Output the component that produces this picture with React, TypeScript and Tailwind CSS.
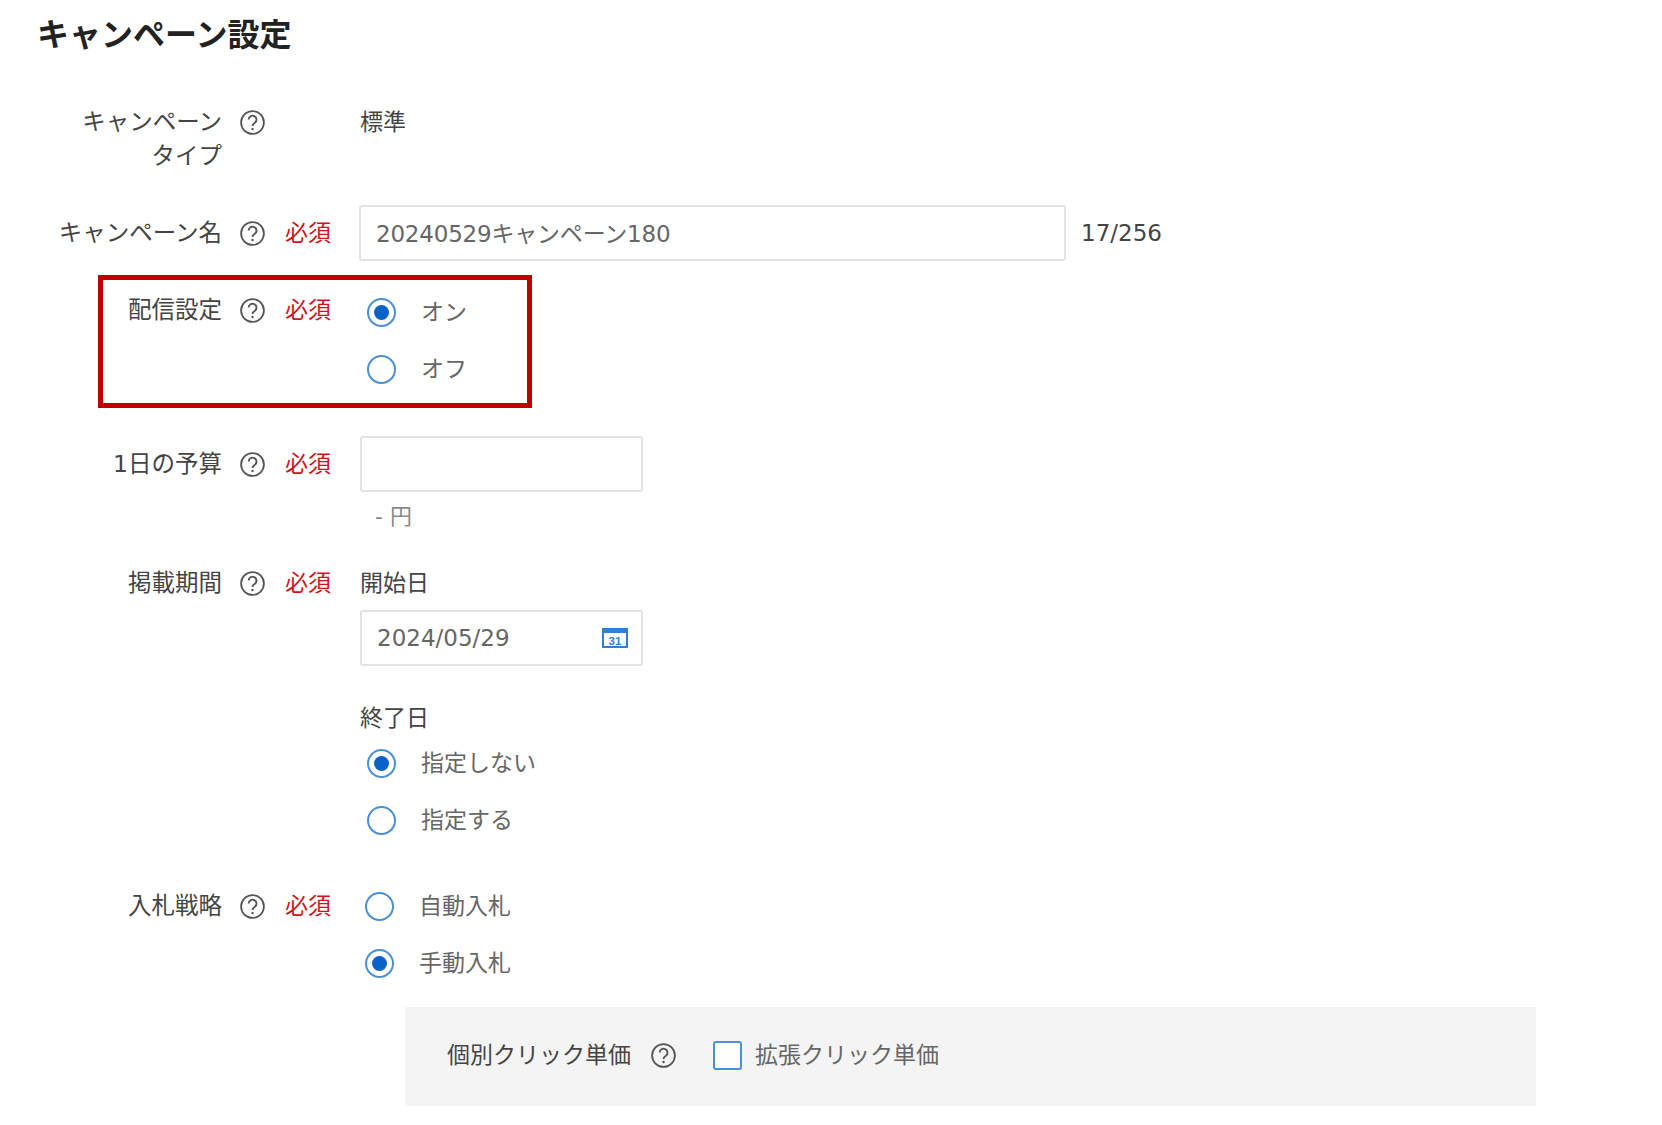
import type { ReactNode } from 'react'

const HelpIcon = () => (
  <svg viewBox="0 0 25 25" className="w-[25px] h-[25px] shrink-0 text-[#555]" fill="none" stroke="currentColor">
    <circle cx="12.5" cy="12.5" r="11.4" strokeWidth="1.8" />
    <path d="M8.7 9.6a3.9 3.9 0 1 1 6.2 3.1c-1.4 1-2.4 1.7-2.4 3.3" strokeWidth="1.9" />
    <circle cx="12.5" cy="19" r="1.2" fill="currentColor" stroke="none" />
  </svg>
)

const Required = () => <span className="w-[47px] text-[23px] text-[#d0121b]">必須</span>

const Radio = ({ label, checked = false, shift = false }: { label: string; checked?: boolean; shift?: boolean }) => (
  <div className={`flex items-center h-[57px] ${shift ? 'pl-[5px]' : 'pl-[7px]'}`}>
    <span className="w-[29px] h-[29px] rounded-full border-2 border-[#4a90d9] bg-white flex items-center justify-center shrink-0">
      {checked && <span className="w-[15px] h-[15px] rounded-full bg-[#0a62c9]" />}
    </span>
    <span className="ml-[25px] text-[23px] text-[#666]">{label}</span>
  </div>
)

const Field = ({ label, required = true, lineH = 'h-[34px]', children, className = '' }: {
  label: ReactNode
  required?: boolean
  lineH?: string
  children: ReactNode
  className?: string
}) => (
  <div className={`flex items-start ${className}`}>
    <div className="w-[222px] text-right text-[23.5px] leading-[34px] text-[#444] shrink-0">{label}</div>
    <div className={`flex items-center shrink-0 ${lineH}`}>
      <span className="ml-[18px] mr-[20px] flex"><HelpIcon /></span>
      {required ? <Required /> : <span className="w-[47px]" />}
    </div>
    <div className="ml-[28px] flex-1 min-w-0">{children}</div>
  </div>
)

const inputCls =
  'h-[56px] border-2 border-[#e3e3e3] rounded-[3px] bg-white pl-[15px] text-[23px] text-[#666] outline-none'

export default function App() {
  return (
    <div className="relative w-full h-[1125px] overflow-hidden bg-white pt-[14px] font-['DejaVu_Sans','Noto_Sans_CJK_JP','Liberation_Sans',sans-serif]">
      <h1 className="ml-[37px] text-[32px] leading-[36px] font-bold text-[#222] font-['Noto_Sans_CJK_JP',sans-serif]">キャンペーン設定</h1>

      <Field label={<>キャンペーン<br />タイプ</>} required={false} className="mt-[55px]">
        <p className="text-[23px] leading-[34px] text-[#444]">標準</p>
      </Field>

      <Field label="キャンペーン名" lineH="h-[56px]" className="mt-[32px] [&>div:first-child]:leading-[56px]">
        <div className="flex items-center">
          <input readOnly value="20240529キャンペーン180" className={`${inputCls} w-[707px] -ml-px pb-[3px] tracking-[-0.2px]`} />
          <span className="ml-[15px] text-[23px] text-[#444]">17/256</span>
        </div>
      </Field>

      {/* 配信設定: highlighted with a red frame */}
      <div className="relative mt-[23px]">
        <div className="absolute left-[98px] top-[-9px] w-[434px] h-[133px] border-[5px] border-[#c00000] pointer-events-none" />
        <Field label="配信設定" lineH="h-[53px]" className="[&>div:first-child]:leading-[53px]">
          <Radio label="オン" checked />
          <Radio label="オフ" />
        </Field>
      </div>

      <Field label="1日の予算" lineH="h-[56px]" className="mt-[38px] [&>div:first-child]:leading-[56px]">
        <input readOnly className={`${inputCls} w-[283px] block`} />
        <p className="mt-[8px] pl-[15px] text-[22px] leading-[34px] text-[#888]">- 円</p>
      </Field>

      <Field label="掲載期間" className="mt-[32px]">
        <p className="text-[23px] leading-[34px] text-[#444]">開始日</p>
        <div className={`${inputCls} mt-[10px] w-[283px] flex items-center justify-between pr-[13px]`}>
          <span>2024/05/29</span>
          <svg viewBox="0 0 26 20" className="w-[26px] h-[20px]">
            <rect x="1" y="1" width="24" height="18" fill="#fff" stroke="#2f7ed8" strokeWidth="2" />
            <rect x="1" y="1" width="24" height="4" fill="#2f7ed8" />
            <text x="13" y="16.5" textAnchor="middle" fontSize="11.5" fontWeight="700" fontFamily="Liberation Sans" fill="#2f7ed8">31</text>
          </svg>
        </div>
        <p className="mt-[35px] text-[23px] leading-[34px] text-[#444]">終了日</p>
        <Radio label="指定しない" checked />
        <Radio label="指定する" />
      </Field>

      <Field label="入札戦略" lineH="h-[57px]" className="mt-[29px] [&>div:first-child]:leading-[57px]">
        <Radio label="自動入札" shift />
        <Radio label="手動入札" checked shift />
        <div className="mt-[15px] ml-[45px] w-[1131px] h-[99px] bg-[#f4f4f4] pl-[42px] pb-[2px] flex items-center">
          <span className="text-[23px] text-[#444]">個別クリック単価</span>
          <span className="ml-[20px] flex"><HelpIcon /></span>
          <span className="ml-[37px] w-[29px] h-[29px] rounded-[3px] border-2 border-[#4a90d9] bg-white shrink-0" />
          <span className="ml-[13px] text-[23px] text-[#666]">拡張クリック単価</span>
        </div>
      </Field>
    </div>
  )
}
